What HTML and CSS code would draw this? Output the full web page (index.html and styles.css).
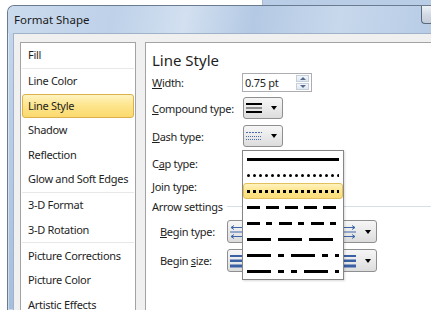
FILE: index.html
```html
<!DOCTYPE html>
<html lang="en">
<head>
  <meta charset="UTF-8" />
  <title>Format Shape</title>
  <link rel="stylesheet" href="styles.css">
</head>
<body>
  <div class="back-window"></div>

  <div class="dialog">
    <div class="titlebar">
      <span class="title">Format Shape</span>
      <span class="close-btn"></span>
    </div>

    <div class="client">
      <ul class="nav">
        <li>Fill</li>
        <li class="sep"></li>
        <li>Line Color</li>
        <li class="active">Line Style</li>
        <li>Shadow</li>
        <li>Reflection</li>
        <li>Glow and Soft Edges</li>
        <li class="sep"></li>
        <li>3-D Format</li>
        <li>3-D Rotation</li>
        <li class="sep"></li>
        <li>Picture Corrections</li>
        <li>Picture Color</li>
        <li>Artistic Effects</li>
      </ul>

      <div class="panel">
        <h2>Line Style</h2>

        <div class="field field-width">
          <label><u>W</u>idth:</label>
          <div class="spin">
            <span class="spin-value">0.75 pt</span>
            <span class="spinner">
              <span class="spin-up"></span>
              <span class="spin-down"></span>
            </span>
          </div>
        </div>

        <div class="field field-compound">
          <label><u>C</u>ompound type:</label>
          <div class="dd">
            <svg class="dd-icon" width="16" height="12" viewBox="0 0 16 12">
              <rect x="0" y="1" width="16" height="2" fill="#000"/>
              <rect x="0" y="5.5" width="16" height="1" fill="#333"/>
              <rect x="0" y="9" width="16" height="2" fill="#000"/>
            </svg>
            <span class="caret"></span>
          </div>
        </div>

        <div class="field field-dash">
          <label><u>D</u>ash type:</label>
          <div class="dd open">
            <svg class="dd-icon" width="16" height="12" viewBox="0 0 16 12">
              <line x1="0" y1="2.5" x2="16" y2="2.5" stroke="#4a6cad" stroke-width="1" stroke-dasharray="2 1"/>
              <line x1="0" y1="6.5" x2="16" y2="6.5" stroke="#4a6cad" stroke-width="1" stroke-dasharray="1 1"/>
              <line x1="0" y1="9.5" x2="16" y2="9.5" stroke="#4a6cad" stroke-width="1" stroke-dasharray="1 1"/>
            </svg>
            <span class="caret"></span>

            <ul class="menu">
              <li><svg width="92" height="3"><line x1="0" y1="1.5" x2="92" y2="1.5" stroke="#000" stroke-width="3"/></svg></li>
              <li><svg width="92" height="3"><line x1="1.5" y1="1.5" x2="92" y2="1.5" stroke="#000" stroke-width="3" stroke-linecap="round" stroke-dasharray="0 6"/></svg></li>
              <li class="selected"><svg width="92" height="3"><line x1="0" y1="1.5" x2="92" y2="1.5" stroke="#000" stroke-width="3" stroke-dasharray="3 3"/></svg></li>
              <li><svg width="92" height="3"><line x1="0" y1="1.5" x2="92" y2="1.5" stroke="#000" stroke-width="3" stroke-dasharray="13 6"/></svg></li>
              <li><svg width="92" height="3"><line x1="0" y1="1.5" x2="92" y2="1.5" stroke="#000" stroke-width="3" stroke-dasharray="13 6 6 7"/></svg></li>
              <li><svg width="92" height="3"><line x1="0" y1="1.5" x2="92" y2="1.5" stroke="#000" stroke-width="3" stroke-dasharray="24 7"/></svg></li>
              <li><svg width="92" height="3"><line x1="0" y1="1.5" x2="92" y2="1.5" stroke="#000" stroke-width="3" stroke-dasharray="24 7 6 7"/></svg></li>
              <li><svg width="92" height="3"><line x1="0" y1="1.5" x2="92" y2="1.5" stroke="#000" stroke-width="3" stroke-dasharray="24 7 6 7 6 7"/></svg></li>
            </ul>
          </div>
        </div>

        <div class="field field-cap">
          <label>C<u>a</u>p type:</label>
        </div>

        <div class="field field-join">
          <label><u>J</u>oin type:</label>
        </div>

        <div class="field field-arrow">
          <span class="group-title">Arrow settings</span>
          <span class="group-line"></span>
        </div>

        <div class="field field-begin">
          <label class="sub"><u>B</u>egin type:</label>
          <div class="dd">
            <svg class="dd-icon" width="16" height="14" viewBox="0 0 16 14">
              <g stroke="#3f66ab" stroke-width="1" fill="none">
                <line x1="1" y1="2.5" x2="16" y2="2.5"/>
                <polyline points="4,0.5 1,2.5 4,4.5"/>
                <line x1="0" y1="7" x2="16" y2="7"/>
                <line x1="1" y1="11.5" x2="16" y2="11.5"/>
                <polyline points="4,9.5 1,11.5 4,13.5"/>
              </g>
            </svg>
            <span class="caret"></span>
          </div>
          <label class="end-label"><u>E</u>nd type:</label>
          <div class="dd">
            <svg class="dd-icon" width="16" height="14" viewBox="0 0 16 14">
              <g stroke="#3f66ab" stroke-width="1" fill="none">
                <line x1="0" y1="2.5" x2="15" y2="2.5"/>
                <polyline points="12,0.5 15,2.5 12,4.5"/>
                <line x1="0" y1="7" x2="16" y2="7"/>
                <line x1="1" y1="11.5" x2="15" y2="11.5"/>
                <polyline points="12,9.5 15,11.5 12,13.5"/>
                <polyline points="4,9.5 1,11.5 4,13.5"/>
              </g>
            </svg>
            <span class="caret"></span>
          </div>
        </div>

        <div class="field field-size">
          <label class="sub">Begin <u>s</u>ize:</label>
          <div class="dd">
            <svg class="dd-icon" width="16" height="14" viewBox="0 0 16 14">
              <rect x="0" y="1" width="16" height="2" fill="#3b5fa3"/>
              <rect x="0" y="5.5" width="16" height="2.5" fill="#3b5fa3"/>
              <rect x="0" y="10.5" width="16" height="3" fill="#3b5fa3"/>
            </svg>
            <span class="caret"></span>
          </div>
          <label class="end-label">End si<u>z</u>e:</label>
          <div class="dd">
            <svg class="dd-icon" width="16" height="14" viewBox="0 0 16 14">
              <rect x="0" y="1" width="16" height="2" fill="#3b5fa3"/>
              <rect x="0" y="5.5" width="16" height="2.5" fill="#3b5fa3"/>
              <rect x="0" y="10.5" width="16" height="3" fill="#3b5fa3"/>
            </svg>
            <span class="caret"></span>
          </div>
        </div>
      </div>
    </div>
  </div>
</body>
</html>
```

FILE: styles.css
```css
* {
  box-sizing: border-box;
}

html, body {
  height: 100%;
  overflow: hidden;
}

body {
  margin: 0;
  background: #ffffff;
  font-family: "Noto Sans", "Open Sans", sans-serif;
  font-size: 11px;
  letter-spacing: -0.3px;
  color: #1e1e1e;
  position: relative;
}

/* window behind the dialog */
.back-window {
  position: absolute;
  left: 262px;
  top: 0;
  width: 169px;
  height: 6px;
  background: #b9cde6;
  border-left: 1px solid #a5b9d3;
}

.dialog {
  position: absolute;
  left: 7px;
  top: 5px;
  width: 424px;
  height: 305px;
  overflow: hidden;
  border: 1px solid #6a7b90;
  border-right: none;
  border-bottom: none;
  border-radius: 7px 0 0 0;
  background: linear-gradient(to bottom, #c6d8ed 0%, #b9cde6 40%, #a6bedd 100%);
  box-shadow: inset 0 0 0 1px rgba(255, 255, 255, 0.45);
}

.titlebar {
  height: 27px;
  display: flex;
  align-items: center;
  padding-left: 6px;
  background: linear-gradient(100deg, #cbdbee 0%, #bed1e9 25%, #d2e0f0 42%, #b4c9e4 58%, #c7d8ec 78%, #b8cce6 100%);
  border-radius: 6px 0 0 0;
}

.title {
  font-size: 11.5px;
  letter-spacing: 0;
  color: #1a1a1a;
}

.close-btn {
  margin-left: auto;
  align-self: flex-start;
  margin-top: -1px;
  width: 10px;
  height: 19px;
  border: 1px solid #5b6a7d;
  border-right: none;
  border-radius: 0 0 0 4px;
  background: linear-gradient(to bottom, #eef2f7, #d2dae5 50%, #c3ccd9);
}

.client {
  margin-left: 5px;
  height: 277px;
  background: #f0f0f0;
  border-top: 1px solid #9fb2ca;
  border-left: 1px solid #9fb2ca;
  padding: 8px 0 0 6px;
  display: flex;
  gap: 9px;
}

/* category list */
.nav {
  list-style: none;
  margin: 0;
  padding: 0;
  width: 116px;
  overflow: hidden;
  background: #ffffff;
  border: 1px solid #a3a3a3;
  border-bottom: none;
}

.nav li {
  height: 24.5px;
  line-height: 24.5px;
  padding-left: 7px;
  white-space: nowrap;
}

.nav li.sep {
  height: 1.5px;
  border-top: 1px solid #e8e8e8;
  margin: 0 1px;
}

.nav li.active {
  margin: 0 1px;
  padding-left: 5px;
  line-height: 22.5px;
  border: 1px solid #dcb04a;
  border-radius: 3px;
  background: linear-gradient(to bottom, #fff3c2 0%, #fde68e 45%, #fbd96e 100%);
}

/* settings panel */
.panel {
  flex: 1;
  min-width: 0;
  background: #ffffff;
  border: 1px solid #a3a3a3;
  border-right: none;
  border-bottom: none;
  padding-left: 6px;
}

h2 {
  margin: 0;
  height: 30px;
  padding-top: 7px;
  font-size: 15px;
  font-weight: normal;
  line-height: 20px;
  letter-spacing: 0;
}

.field {
  display: flex;
  align-items: center;
  height: 22px;
}

.field label {
  width: 90px;
  white-space: nowrap;
}

u {
  text-underline-offset: 1px;
}

.field-width {
  height: 19px;
}

.field-compound {
  margin-top: 5px;
}

.field-dash {
  margin-top: 6px;
}

.field-cap {
  margin-top: 5px;
}

.field-join {
  margin-top: 1px;
}

.field-arrow {
  margin-top: 1px;
  height: 16px;
}

.group-line {
  flex: 1;
  height: 1px;
  margin-left: 4px;
  background: #d5dfe6;
}

.field-begin,
.field-size {
  height: 23px;
  margin-top: 6px;
}

.field label.sub {
  width: 75px;
  padding-left: 8px;
}

.field label.end-label {
  width: 70px;
  padding-left: 14px;
}

/* spin box */
.spin {
  width: 70px;
  height: 19px;
  border: 1px solid #abadb3;
  display: flex;
  align-items: center;
  padding-left: 2px;
}

.spinner {
  margin-left: auto;
  margin-right: 2px;
  display: flex;
  flex-direction: column;
  gap: 1px;
}

.spin-up,
.spin-down {
  width: 13px;
  height: 7px;
  border: 1px solid #c5cfdc;
  background: linear-gradient(to bottom, #f4f7fb, #dfe7f2);
  position: relative;
}

.spin-up::after,
.spin-down::after {
  content: "";
  position: absolute;
  left: 3px;
  top: 1px;
  border-left: 3px solid transparent;
  border-right: 3px solid transparent;
}

.spin-up::after {
  border-bottom: 3px solid #566a8c;
}

.spin-down::after {
  border-top: 3px solid #566a8c;
}

/* dropdown buttons */
.dd {
  flex-shrink: 0;
  width: 40px;
  height: 22px;
  margin-left: 1px;
  border: 1px solid #8e8f91;
  border-radius: 3px;
  background: linear-gradient(to bottom, #f6f6f6 0%, #eaeaea 50%, #dcdcdc 100%);
  display: flex;
  align-items: center;
  padding: 0 5px 0 2px;
}

.field-begin .dd,
.field-size .dd {
  height: 23px;
  margin-left: 0;
}

.dd-icon {
  display: block;
}

.caret {
  margin-left: auto;
  border-left: 3.5px solid transparent;
  border-right: 3.5px solid transparent;
  border-top: 4px solid #000000;
}

.dd.open {
  position: relative;
}

/* dash type popup */
.menu {
  position: absolute;
  left: -2px;
  top: 24px;
  z-index: 10;
  width: 102px;
  margin: 0;
  padding: 0;
  list-style: none;
  background: #ffffff;
  border: 1px solid #868686;
  box-shadow: 1px 1px 2px rgba(0, 0, 0, 0.15);
}

.menu li {
  height: 16px;
  border: 1px solid transparent;
  padding-left: 3px;
  display: flex;
  align-items: center;
}

.menu li svg {
  display: block;
}

.menu li.selected {
  border-color: #e2c05c;
  border-radius: 3px;
  background: linear-gradient(to bottom, #fff2bd 0%, #fde68e 50%, #fcdc78 100%);
}
```
